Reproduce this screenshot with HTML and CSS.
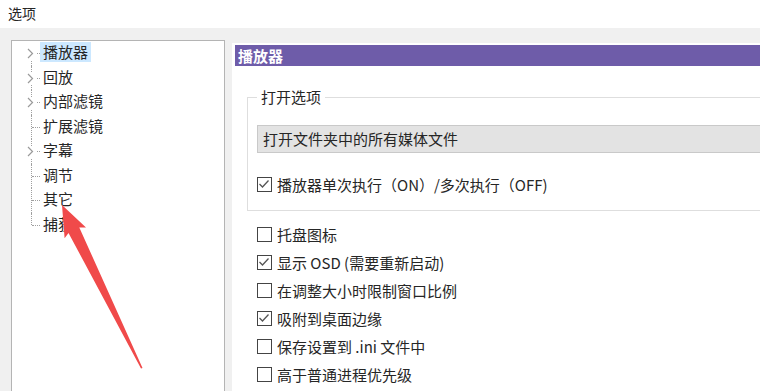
FILE: index.html
```html
<!DOCTYPE html>
<html lang="zh-CN">
<head>
    <meta charset="UTF-8">
    <meta name="viewport" content="width=device-width, initial-scale=1.0">
    <title>选项</title>
    <link rel="stylesheet" href="styles.css">
</head>
<body>
    <div class="titlebar">选项</div>

    <div class="main">
        <!-- left navigation tree -->
        <div class="tree">
            <ul>
                <li class="node first"><span class="chev"><svg width="7" height="11" viewBox="0 0 7 11"><polyline points="1,1 5.5,5.5 1,10" /></svg></span><span class="label selected">播放器</span></li>
                <li class="node"><span class="chev"><svg width="7" height="11" viewBox="0 0 7 11"><polyline points="1,1 5.5,5.5 1,10" /></svg></span><span class="label">回放</span></li>
                <li class="node"><span class="chev"><svg width="7" height="11" viewBox="0 0 7 11"><polyline points="1,1 5.5,5.5 1,10" /></svg></span><span class="label">内部滤镜</span></li>
                <li class="node"><span class="label">扩展滤镜</span></li>
                <li class="node"><span class="chev"><svg width="7" height="11" viewBox="0 0 7 11"><polyline points="1,1 5.5,5.5 1,10" /></svg></span><span class="label">字幕</span></li>
                <li class="node"><span class="label">调节</span></li>
                <li class="node"><span class="label">其它</span></li>
                <li class="node last"><span class="label">捕获</span></li>
            </ul>
        </div>

        <!-- settings page -->
        <div class="page">
            <div class="page-head">播放器</div>

            <fieldset class="group">
                <legend>打开选项</legend>
                <div class="field">打开文件夹中的所有媒体文件</div>
                <div class="check first-check"><span class="box"><svg width="14" height="14" viewBox="0 0 14 14"><polyline points="2.5,7 5.5,10 11.5,3.5" /></svg></span>播放器单次执行（ON）/多次执行（OFF)</div>
            </fieldset>

            <div class="checks">
                <div class="check"><span class="box"></span>托盘图标</div>
                <div class="check"><span class="box"><svg width="14" height="14" viewBox="0 0 14 14"><polyline points="2.5,7 5.5,10 11.5,3.5" /></svg></span>显示 OSD (需要重新启动)</div>
                <div class="check"><span class="box"></span>在调整大小时限制窗口比例</div>
                <div class="check"><span class="box"><svg width="14" height="14" viewBox="0 0 14 14"><polyline points="2.5,7 5.5,10 11.5,3.5" /></svg></span>吸附到桌面边缘</div>
                <div class="check"><span class="box"></span>保存设置到 .ini 文件中</div>
                <div class="check"><span class="box"></span>高于普通进程优先级</div>
            </div>
        </div>
    </div>

    <!-- red annotation arrow pointing at 其它 -->
    <svg class="pointer" width="760" height="391" viewBox="0 0 760 391">
        <polygon points="62,205 86,227.6 79.3,227.5 142.5,368 141,368.5 68.5,232.9 64.6,238.2" />
    </svg>
</body>
</html>
```

FILE: styles.css
```css
body {
    margin: 0;
    width: 760px;
    height: 391px;
    overflow: hidden;
    position: relative;
    background: #f0f0f0;
    font-family: "Noto Sans CJK SC", "Microsoft YaHei", sans-serif;
    font-size: 15px;
    color: #262626;
}

.titlebar {
    height: 28px;
    line-height: 26px;
    padding-left: 8px;
    font-size: 14px;
    background: #fff;
}

.main {
    display: flex;
    height: 363px;
}

/* tree */
.tree {
    width: 212px;
    margin: 12px 0 0 11px;
    border: 1px solid #b4b4b4;
    border-bottom: none;
    background: #fff;
}

.tree ul {
    list-style: none;
    margin: 0;
    padding: 0;
}

.node {
    position: relative;
    display: flex;
    align-items: center;
    height: 24.5px;
    padding-left: 28px;
}

.node::before {
    content: "";
    position: absolute;
    left: 19px;
    top: 0;
    bottom: 0;
    border-left: 1px dotted #a0a0a0;
}

.node.first::before {
    top: 50%;
}

.node.last::before {
    bottom: 50%;
}

.node::after {
    content: "";
    position: absolute;
    left: 20px;
    top: 50%;
    width: 8px;
    border-top: 1px dotted #a0a0a0;
}

.chev {
    position: absolute;
    left: 15px;
    top: 50%;
    margin-top: -5px;
    width: 9px;
    height: 12px;
    background: #fff;
    z-index: 1;
}

.chev svg {
    display: block;
    fill: none;
    stroke: #9a9a9a;
    stroke-width: 1.2;
}

.label {
    padding: 0 3px;
    line-height: 20px;
    margin-top: -2px;
}

.label.selected {
    background: #cce8ff;
}

/* settings page */
.page {
    flex: 1;
    margin: 15px 0 0 7px;
    padding: 2px 0 0 3px;
    background: #fff;
}

.page-head {
    height: 21px;
    line-height: 21px;
    padding-left: 3px;
    background: #6e5ca9;
    color: #fff;
    font-weight: bold;
}

.group {
    margin: 21px 0 0 12px;
    padding: 0 0 14px 9px;
    border: 1px solid #dedede;
    border-right: none;
    min-width: 0;
}

.group legend {
    padding: 0 4px;
    line-height: 20px;
}

.field {
    margin-top: 18px;
    height: 26px;
    line-height: 26px;
    padding-left: 5px;
    background: #e3e3e3;
    border: 1px solid #c9c9c9;
    border-right: none;
}

.check {
    display: flex;
    align-items: center;
    gap: 5px;
    height: 28px;
    white-space: nowrap;
}

.first-check {
    height: 24px;
    margin-top: 19px;
}

.checks {
    margin-top: 9px;
    padding-left: 22px;
}

.box {
    width: 13px;
    height: 13px;
    border: 1px solid #444;
    background: #fff;
    flex-shrink: 0;
}

.box svg {
    display: block;
    margin: -1px;
    fill: none;
    stroke: #555;
    stroke-width: 1.3;
}

.pointer {
    position: absolute;
    left: 0;
    top: 0;
    pointer-events: none;
}

.pointer polygon {
    fill: #f04a4a;
}
```
